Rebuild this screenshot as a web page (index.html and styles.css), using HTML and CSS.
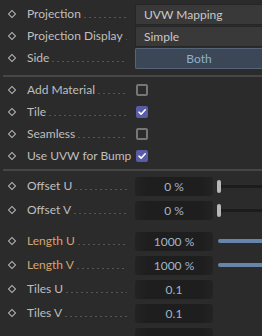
FILE: index.html
```html
<!DOCTYPE html>
<html>
<head>
<meta charset="utf-8">
<link rel="stylesheet" href="styles.css">
</head>
<body>
<div class="panel">
  <section class="group g-top">
    <div class="row">
      <span class="key"></span>
      <span class="label"><span class="name">Projection</span><span class="leader"></span></span>
      <div class="control"><div class="select">UVW Mapping</div></div>
    </div>
    <div class="row">
      <span class="key"></span>
      <span class="label"><span class="name">Projection Display</span><span class="leader"></span></span>
      <div class="control"><div class="select">Simple</div></div>
    </div>
    <div class="row">
      <span class="key"></span>
      <span class="label"><span class="name">Side</span><span class="leader"></span></span>
      <div class="control"><div class="toggle">Both</div></div>
    </div>
  </section>
  <div class="sep"></div>
  <section class="group g-check">
    <div class="row">
      <span class="key"></span>
      <span class="label"><span class="name">Add Material</span><span class="leader"></span></span>
      <div class="control"><span class="check"></span></div>
    </div>
    <div class="row">
      <span class="key"></span>
      <span class="label"><span class="name">Tile</span><span class="leader"></span></span>
      <div class="control"><span class="check on"><svg viewBox="0 0 12 12" width="12" height="12"><path d="M3 6.2 L5.1 8.2 L9.2 3.8" fill="none" stroke="#fff" stroke-width="1.6" stroke-linecap="round" stroke-linejoin="round"/></svg></span></div>
    </div>
    <div class="row">
      <span class="key"></span>
      <span class="label"><span class="name">Seamless</span><span class="leader"></span></span>
      <div class="control"><span class="check"></span></div>
    </div>
    <div class="row">
      <span class="key"></span>
      <span class="label"><span class="name">Use UVW for Bump</span><span class="leader"></span></span>
      <div class="control"><span class="check on"><svg viewBox="0 0 12 12" width="12" height="12"><path d="M3 6.2 L5.1 8.2 L9.2 3.8" fill="none" stroke="#fff" stroke-width="1.6" stroke-linecap="round" stroke-linejoin="round"/></svg></span></div>
    </div>
  </section>
  <div class="sep"></div>
  <section class="group g-num">
    <div class="row tall">
      <span class="key"></span>
      <span class="label"><span class="name">Offset U</span><span class="leader"></span></span>
      <div class="control"><span class="field">0 %</span><span class="slider"><span class="thumb"></span><span class="track"></span></span></div>
    </div>
    <div class="row tall">
      <span class="key"></span>
      <span class="label"><span class="name">Offset V</span><span class="leader"></span></span>
      <div class="control"><span class="field">0 %</span><span class="slider"><span class="thumb"></span><span class="track"></span></span></div>
    </div>
  </section>
  <section class="group g-len">
    <div class="row tall">
      <span class="key"></span>
      <span class="label accent"><span class="name">Length U</span><span class="leader"></span></span>
      <div class="control"><span class="field">1000 %</span><span class="slider"><span class="track full"></span></span></div>
    </div>
    <div class="row tall">
      <span class="key"></span>
      <span class="label accent"><span class="name">Length V</span><span class="leader"></span></span>
      <div class="control"><span class="field">1000 %</span><span class="slider"><span class="track full"></span></span></div>
    </div>
    <div class="row tall">
      <span class="key"></span>
      <span class="label"><span class="name">Tiles U</span><span class="leader"></span></span>
      <div class="control"><span class="field">0.1</span></div>
    </div>
    <div class="row tall">
      <span class="key"></span>
      <span class="label"><span class="name">Tiles V</span><span class="leader"></span></span>
      <div class="control"><span class="field">0.1</span></div>
    </div>
    <div class="row tall">
      <span class="key blank"></span>
      <span class="label"></span>
      <div class="control"><span class="field"></span></div>
    </div>
  </section>
</div>
</body>
</html>
```
FILE: styles.css
```css
html, body {
  margin: 0;
  padding: 0;
  background: #2b2b2b;
  overflow: hidden;
}
body {
  font-family: Lato, "Open Sans", sans-serif;
  font-size: 12px;
  color: #bfbfbf;
}
.panel {
  display: flex;
  flex-direction: column;
  padding-top: 3px;
}
.group {
  display: flex;
  flex-direction: column;
}
.row {
  display: flex;
  align-items: center;
  height: 22px;
}
.row.tall {
  height: 24px;
}
.key {
  flex: none;
  box-sizing: border-box;
  width: 6px;
  height: 6px;
  border: 1.5px solid #b4b4b4;
  transform: rotate(45deg);
  margin-left: 9px;
  margin-right: 12px;
}
.key.blank {
  visibility: hidden;
}
.label {
  flex: none;
  width: 100px;
  margin-right: 8px;
  display: flex;
  align-items: flex-end;
  white-space: nowrap;
  line-height: 16px;
}
.label.accent {
  color: #d6a46f;
}
.leader {
  flex: 1;
  height: 1px;
  margin: 0 0 4px 3px;
  background: repeating-linear-gradient(90deg, #555 0 2px, transparent 2px 5px);
}
.control {
  flex: 1;
  display: flex;
  align-items: center;
  height: 100%;
}
.select {
  flex: 1;
  box-sizing: border-box;
  height: 21px;
  line-height: 20px;
  padding-left: 8px;
  background: #393939;
  border: 1px solid #262626;
  border-right: none;
  border-radius: 2px 0 0 2px;
  color: #c9c9c9;
}
.toggle {
  flex: 1;
  box-sizing: border-box;
  height: 21px;
  line-height: 19px;
  text-align: center;
  background: #3b4757;
  border: 1px solid #56657a;
  border-right: none;
  border-radius: 2px 0 0 2px;
  color: #8eb0c8;
}
.check {
  box-sizing: border-box;
  width: 12px;
  height: 12px;
  border: 2px solid #767676;
  border-radius: 2px;
  margin-left: 1px;
  margin-top: -1px;
  position: relative;
}
.check.on {
  background: #5a5ca6;
  border-color: #5a5ca6;
}
.check svg {
  position: absolute;
  left: -2px;
  top: -2px;
}
.sep {
  height: 2px;
  background: #464646;
  margin: 6px 0 2px 3px;
}
.g-check + .sep {
  margin-top: 2px;
  margin-bottom: 3px;
}
.g-len {
  margin-top: 7px;
}
.field {
  flex: none;
  width: 78px;
  height: 19px;
  line-height: 19px;
  border-radius: 3px;
  background: linear-gradient(90deg, #232323 0, #1e1e1e 12px, #1e1e1e 66px, #232323 100%);
  color: #a2b5c7;
  text-align: center;
}
.slider {
  flex: 1;
  display: flex;
  align-items: center;
  margin-left: 4px;
}
.thumb {
  flex: none;
  width: 4px;
  height: 13px;
  border-radius: 2px;
  background: #b8b8b8;
}
.track {
  flex: 1;
  height: 3px;
  background: #1c1c1c;
}
.track.full {
  height: 4px;
  margin-left: 1px;
  border-radius: 2px 0 0 2px;
  background: #6784ab;
}
```
